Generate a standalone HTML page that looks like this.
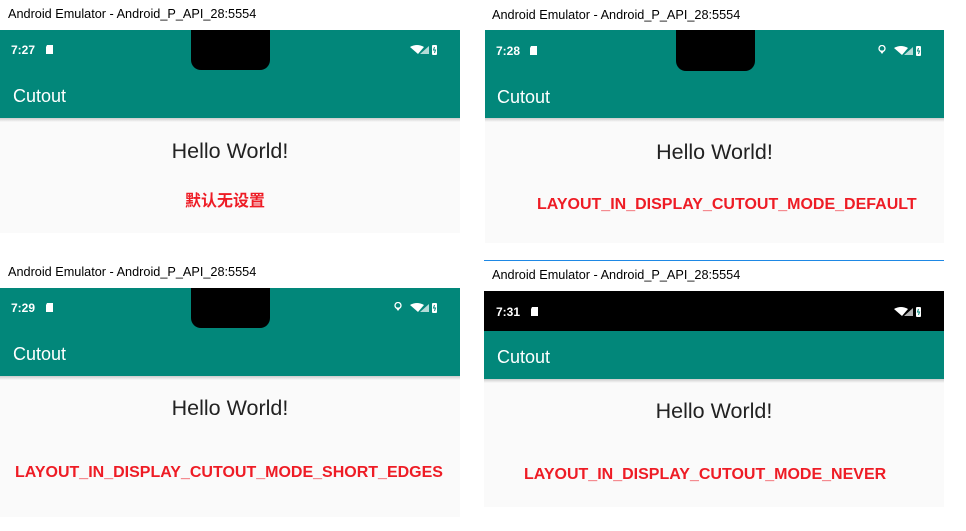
<!DOCTYPE html>
<html><head><meta charset="utf-8"><style>
*{margin:0;padding:0;box-sizing:border-box}
body{width:966px;height:531px;background:#fff;position:relative;overflow:hidden;font-family:"Liberation Sans","Noto Sans CJK SC",sans-serif}
.a{position:absolute}
.title{font-size:12.7px;color:#000;white-space:nowrap}
.teal{background:#02877a}
.cont{background:#fafafa}
.time{color:#fff;font-size:12px;font-weight:bold}
.cut{color:#fff;font-size:18px}
.hello{font-size:21.5px;color:#222;text-align:center;white-space:nowrap}
.red{color:#ee1c25;font-weight:bold;font-size:16px;white-space:nowrap}
.notch{background:#000;border-radius:0 0 10px 10px}
.shadow{height:4px;background:linear-gradient(#ccc,#fafafa)}
</style></head><body>
<svg width="0" height="0" style="position:absolute"><defs>
<g id="sd"><path d="M1 0H7V9H0V2Z" fill="#fff"/></g>
<g id="ic"><path d="M0 2Q7-2 14 2L8 9Z" fill="#fff"/><path d="M10 9L19 1V9Z" fill="#fff" opacity=".7"/><rect x="22" y="0" width="5" height="10" rx="1" fill="#fff"/><path d="M24.5 2L23.5 5H25.5L24.5 8" stroke="#02877a" fill="none" stroke-width="1"/></g>
<g id="loc"><circle cx="4" cy="3.5" r="3" fill="none" stroke="#fff" stroke-width="1.3"/><path d="M1.5 5.5L4 9L6.5 5.5" fill="#fff"/></g>
</defs></svg>

<!-- Panel 1 -->
<div class="a title" style="left:8px;top:7px">Android Emulator - Android_P_API_28:5554</div>
<div class="a teal" style="left:0;top:30px;width:460px;height:88px"></div>
<div class="a notch" style="left:191px;top:30px;width:79px;height:40px"></div>
<div class="a time" style="left:11px;top:43px">7:27</div>
<svg class="a" style="left:46px;top:45px" width="8" height="9"><use href="#sd"/></svg>
<svg class="a" style="left:410px;top:45px" width="28" height="10"><use href="#ic"/></svg>
<div class="a cut" style="left:13px;top:86px">Cutout</div>
<div class="a cont" style="left:0;top:118px;width:460px;height:115px"><div class="shadow"></div></div>
<div class="a hello" style="left:0;width:460px;top:139px">Hello World!</div>
<div class="a red" style="left:185px;top:187px">默认无设置</div>

<!-- Panel 2 -->
<div class="a title" style="left:492px;top:8px">Android Emulator - Android_P_API_28:5554</div>
<div class="a teal" style="left:485px;top:30px;width:459px;height:88px"></div>
<div class="a notch" style="left:676px;top:30px;width:79px;height:41px"></div>
<div class="a time" style="left:496px;top:44px">7:28</div>
<svg class="a" style="left:530px;top:46px" width="8" height="9"><use href="#sd"/></svg>
<svg class="a" style="left:878px;top:45px" width="8" height="10"><use href="#loc"/></svg>
<svg class="a" style="left:894px;top:46px" width="28" height="10"><use href="#ic"/></svg>
<div class="a cut" style="left:497px;top:87px">Cutout</div>
<div class="a cont" style="left:485px;top:118px;width:459px;height:125px"><div class="shadow"></div></div>
<div class="a hello" style="left:485px;width:459px;top:140px">Hello World!</div>
<div class="a red" style="left:537px;top:196px">LAYOUT_IN_DISPLAY_CUTOUT_MODE_DEFAULT</div>

<!-- Panel 3 -->
<div class="a title" style="left:8px;top:265px">Android Emulator - Android_P_API_28:5554</div>
<div class="a teal" style="left:0;top:288px;width:460px;height:88px"></div>
<div class="a notch" style="left:191px;top:288px;width:79px;height:40px"></div>
<div class="a time" style="left:11px;top:301px">7:29</div>
<svg class="a" style="left:46px;top:303px" width="8" height="9"><use href="#sd"/></svg>
<svg class="a" style="left:394px;top:302px" width="8" height="10"><use href="#loc"/></svg>
<svg class="a" style="left:410px;top:303px" width="28" height="10"><use href="#ic"/></svg>
<div class="a cut" style="left:13px;top:344px">Cutout</div>
<div class="a cont" style="left:0;top:376px;width:460px;height:141px"><div class="shadow"></div></div>
<div class="a hello" style="left:0;width:460px;top:396px">Hello World!</div>
<div class="a red" style="left:15px;top:464px">LAYOUT_IN_DISPLAY_CUTOUT_MODE_SHORT_EDGES</div>

<!-- Panel 4 -->
<div class="a" style="left:484px;top:260px;width:460px;height:1px;background:#1e88e5"></div>
<div class="a title" style="left:492px;top:268px">Android Emulator - Android_P_API_28:5554</div>
<div class="a" style="left:484px;top:291px;width:460px;height:40px;background:#000"></div>
<div class="a time" style="left:496px;top:305px">7:31</div>
<svg class="a" style="left:531px;top:307px" width="8" height="9"><use href="#sd"/></svg>
<svg class="a" style="left:894px;top:307px" width="28" height="10"><use href="#ic"/></svg>
<div class="a teal" style="left:484px;top:331px;width:460px;height:48px"></div>
<div class="a cut" style="left:497px;top:347px">Cutout</div>
<div class="a cont" style="left:484px;top:379px;width:460px;height:128px"><div class="shadow"></div></div>
<div class="a hello" style="left:484px;width:460px;top:399px">Hello World!</div>
<div class="a red" style="left:524px;top:466px">LAYOUT_IN_DISPLAY_CUTOUT_MODE_NEVER</div>
</body></html>
